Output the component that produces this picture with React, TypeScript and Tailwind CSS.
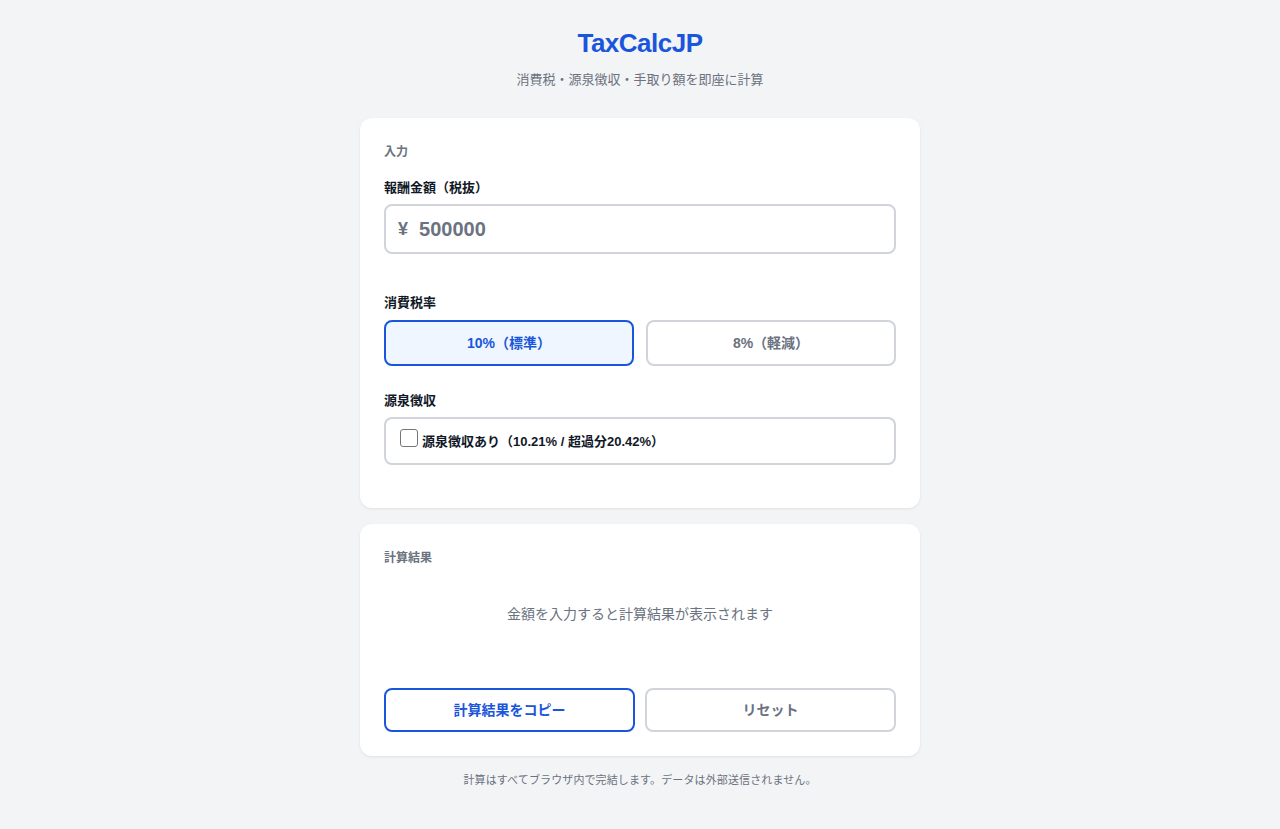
import React from "react";

const font = { fontFamily: '"Liberation Sans", Arial, "Noto Sans CJK JP", sans-serif' };

export default function App() {
  return (
    <div className="min-h-[829px] w-full bg-[#f3f4f6] pt-[28px] pb-[32px]" style={font}>
      <div className="mx-auto w-[560px] flex flex-col">
        <h1 className="text-center text-[26px] leading-[30px] font-bold text-[#1a56db] tracking-[-0.5px]">TaxCalcJP</h1>
        <p className="text-center text-[13px] leading-[20px] mt-[12px] text-[#6b7280]">消費税・源泉徴収・手取り額を即座に計算</p>

        <div className="mt-[28px] bg-white rounded-xl shadow-[0_1px_3px_rgba(0,0,0,0.08)] p-6 pb-[43px]">
          <div className="text-[12px] leading-[20px] font-bold text-[#6b7280]">入力</div>

          <div className="mt-[15px] text-[13px] leading-[22px] font-bold text-[#111827]">報酬金額（税抜）</div>
          <div className="mt-[5px] h-[50px] border-2 border-[#d1d5db] rounded-lg flex items-center pl-3">
            <span className="text-[18px] font-bold text-[#6b7280]">¥</span>
            <span className="ml-[11px] text-[20px] font-bold text-[#6b7280]">500000</span>
          </div>

          <div className="mt-[38px] text-[13px] leading-[22px] font-bold text-[#111827]">消費税率</div>
          <div className="mt-[6px] grid grid-cols-2 gap-3">
            <button className="h-[46px] rounded-lg border-2 border-[#1a56db] bg-[#eff6ff] text-[14px] font-bold text-[#1a56db]">10%（標準）</button>
            <button className="h-[46px] rounded-lg border-2 border-[#d1d5db] bg-white text-[14px] font-bold text-[#6b7280]">8%（軽減）</button>
          </div>

          <div className="mt-[24px] text-[13px] leading-[22px] font-bold text-[#111827]">源泉徴収</div>
          <div className="mt-[5px] h-[48px] border-2 border-[#d1d5db] rounded-lg flex items-center pl-[14px]">
            <span className="w-[18px] h-[18px] border border-[#767676] rounded-[3px] bg-white -mt-[6px]"></span>
            <span className="ml-1 text-[13px] leading-[20px] pt-[2px] font-bold text-[#111827]">源泉徴収あり（10.21% / 超過分20.42%）</span>
          </div>
        </div>

        <div className="mt-4 bg-white rounded-xl shadow-[0_1px_3px_rgba(0,0,0,0.08)] p-6">
          <div className="text-[12px] leading-[20px] font-bold text-[#6b7280]">計算結果</div>
          <div className="mt-[36px] text-center text-[14px] leading-[20px] text-[#6b7280]">金額を入力すると計算結果が表示されます</div>
          <div className="mt-[64px] grid grid-cols-2 gap-[10px]">
            <button className="h-[44px] rounded-lg border-2 border-[#1a56db] bg-white text-[14px] font-bold text-[#1a56db]">計算結果をコピー</button>
            <button className="h-[44px] rounded-lg border-2 border-[#d1d5db] bg-white text-[14px] font-bold text-[#6b7280]">リセット</button>
          </div>
        </div>

        <p className="mt-4 text-center text-[11px] leading-[16px] tracking-[0.12px] text-[#6b7280]">計算はすべてブラウザ内で完結します。データは外部送信されません。</p>
      </div>
    </div>
  );
}
